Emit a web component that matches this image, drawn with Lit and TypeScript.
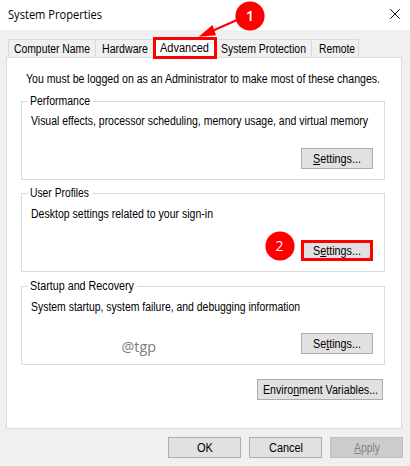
import { LitElement, html, css, svg } from "lit";
import { customElement, property } from "lit/decorators.js";

/** A label whose glyphs are condensed to a given width; "_" marks the access key. */
@customElement("fit-label")
class FitLabel extends LitElement {
  @property() text = "";
  @property({ type: Number }) width = 0;
  static styles = css`
    :host { display: inline-block; white-space: pre; flex: none; }
    .ink { display: inline-block; transform-origin: 0 50%; }
    .key { text-decoration: underline; text-decoration-thickness: 1px; text-underline-offset: 1px; text-decoration-skip-ink: none; }
  `;
  firstUpdated() {
    const ink = this.renderRoot.querySelector(".ink") as HTMLElement;
    const natural = ink.getBoundingClientRect().width;
    this.style.width = this.width + "px";
    ink.style.transform = `scaleX(${this.width / natural})`;
  }
  render() {
    const i = this.text.indexOf("_");
    const body = i < 0
      ? this.text
      : html`${this.text.slice(0, i)}<span class="key">${this.text[i + 1]}</span>${this.text.slice(i + 2)}`;
    return html`<span class="ink">${body}</span>`;
  }
}

const label = (text: string, width: number) =>
  html`<fit-label .text=${text} .width=${width}></fit-label>`;

const groups = [
  { name: "first", title: "Performance", tw: 60, body: "Visual effects, processor scheduling, memory usage, and virtual memory", bw: 337, key: "_Settings..." },
  { name: "second", title: "User Profiles", tw: 59, body: "Desktop settings related to your sign-in", bw: 182, key: "S_ettings..." },
  { name: "third", title: "Startup and Recovery", tw: 104, body: "System startup, system failure, and debugging information", bw: 269, key: "Se_ttings..." },
];

@customElement("app-root")
class AppRoot extends LitElement {
  static styles = css`
    :host { display: block; position: relative; width: 410px; height: 466px; overflow: hidden; background: #f0f0f0; color: #000; font: 12.5px/16px "Liberation Sans", Arial, sans-serif; }
    * { box-sizing: border-box; }
    .title { height: 30px; background: #fff; display: flex; justify-content: space-between; padding: 7px 10px 0 8px; font: 12px/16px "Open Sans", sans-serif; }
    .close { width: 10px; height: 10px; margin-top: 2px; }
    .tabs { display: flex; height: 27px; padding: 9px 0 0 8px; }
    .tab { height: 18px; border: 1px solid #d9d9d9; border-width: 1px 1px 0 0; padding: 1px 0 0 6px; }
    .t0 { width: 88px; border-left-width: 1px; padding-left: 5px; }
    .t1 { width: 58px; }
    .t2 { width: 64px; height: 22px; margin: -2px 0 0 -1px; border: 3px solid #f00; background: #fff; padding: 0 0 0 4px; z-index: 1; }
    .t3 { width: 95px; padding-left: 4px; }
    .t4 { width: 47px; padding-left: 7px; }
    .panel { margin: 0 7px 0 6px; height: 372px; width: 396px; border: 1px solid #dcdcdc; background: #fff; padding: 13px 17px 0 14px; display: flex; flex-direction: column; }
    .intro { margin-left: 5px; height: 16px; }
    .group { flex: none; height: 79px; width: 364px; border: 1px solid #dcdcdc; padding: 0 11px 0 9px; }
    .first { margin-top: 14px; }
    .second { margin-top: 13px; }
    .third { margin-top: 14px; }
    .legend { display: block; width: max-content; background: #fff; padding: 0 3px 0 2px; margin: -9px 0 0 -3px; height: 16px; }
    .body { height: 16px; margin-top: 4px; }
    .second .body, .third .body { margin-top: 5px; }
    .actions { display: flex; justify-content: flex-end; align-items: center; margin-top: 19px; }
    .second .actions, .third .actions { margin-top: 18px; }
    .btn { height: 21px; width: 72px; border: 1px solid #adadad; background: #e1e1e1; display: flex; align-items: center; justify-content: center; padding-top: 1px; }
    .second .btn { border: 3px solid #f00; }
    .env { width: 126px; margin: 14px 0 0 236px; flex: none; }
    .footer { display: flex; gap: 8px; justify-content: flex-end; padding: 8px 7px 0 0; }
    .footer .btn { width: 73px; }
    .footer .off { background: #ccc; border-color: #bfbfbf; color: #838383; }
    .notes { position: absolute; inset: 0; pointer-events: none; z-index: 3; }
    .num { font: 600 15px "Open Sans", sans-serif; fill: #fff; text-anchor: middle; }
    .light { font-weight: 500; font-size: 14px; }
    .mark { font: 14.3px "Open Sans", sans-serif; fill: #7b7b7b; }
  `;
  render() {
    return html`
      <div class="title">
        ${label("System Properties", 94)}
        <svg class="close" viewBox="0 0 10 10"><path d="M.3 .3 9.7 9.7M9.7 .3 .3 9.7" stroke="#000" fill="none"/></svg>
      </div>
      <div class="tabs">
        <div class="tab t0">${label("Computer Name", 76)}</div>
        <div class="tab t1">${label("Hardware", 46)}</div>
        <div class="tab t2">${label("Advanced", 49)}</div>
        <div class="tab t3">${label("System Protection", 85)}</div>
        <div class="tab t4">${label("Remote", 36)}</div>
      </div>
      <div class="panel">
        <div class="intro">${label("You must be logged on as an Administrator to make most of these changes.", 354)}</div>
        ${groups.map((g) => html`
          <section class="group ${g.name}">
            <div class="legend">${label(g.title, g.tw)}</div>
            <div class="body">${label(g.body, g.bw)}</div>
            <div class="actions"><div class="btn">${label(g.key, 48)}</div></div>
          </section>`)}
        <div class="btn env">${label("Enviro_nment Variables...", 115)}</div>
      </div>
      <div class="footer">
        <div class="btn">${label("OK", 16)}</div>
        <div class="btn">${label("Cancel", 34)}</div>
        <div class="btn off">${label("_Apply", 26)}</div>
      </div>
      <svg class="notes" width="410" height="466">
        ${svg`
          <path d="M237 20 212 31" stroke="#f00" stroke-width="2"/>
          <path d="M198.7 36.7 212.5 25 216 35.3z" fill="#f00"/>
          <circle cx="250" cy="16" r="14.6" fill="#f00"/>
          <text class="num" x="250" y="21">1</text>
          <circle cx="280" cy="246" r="14.6" fill="#f00"/>
          <text class="num light" x="279.5" y="251">2</text>
          <text class="mark" x="121.5" y="352">@tgp</text>`}
      </svg>`;
  }
}
